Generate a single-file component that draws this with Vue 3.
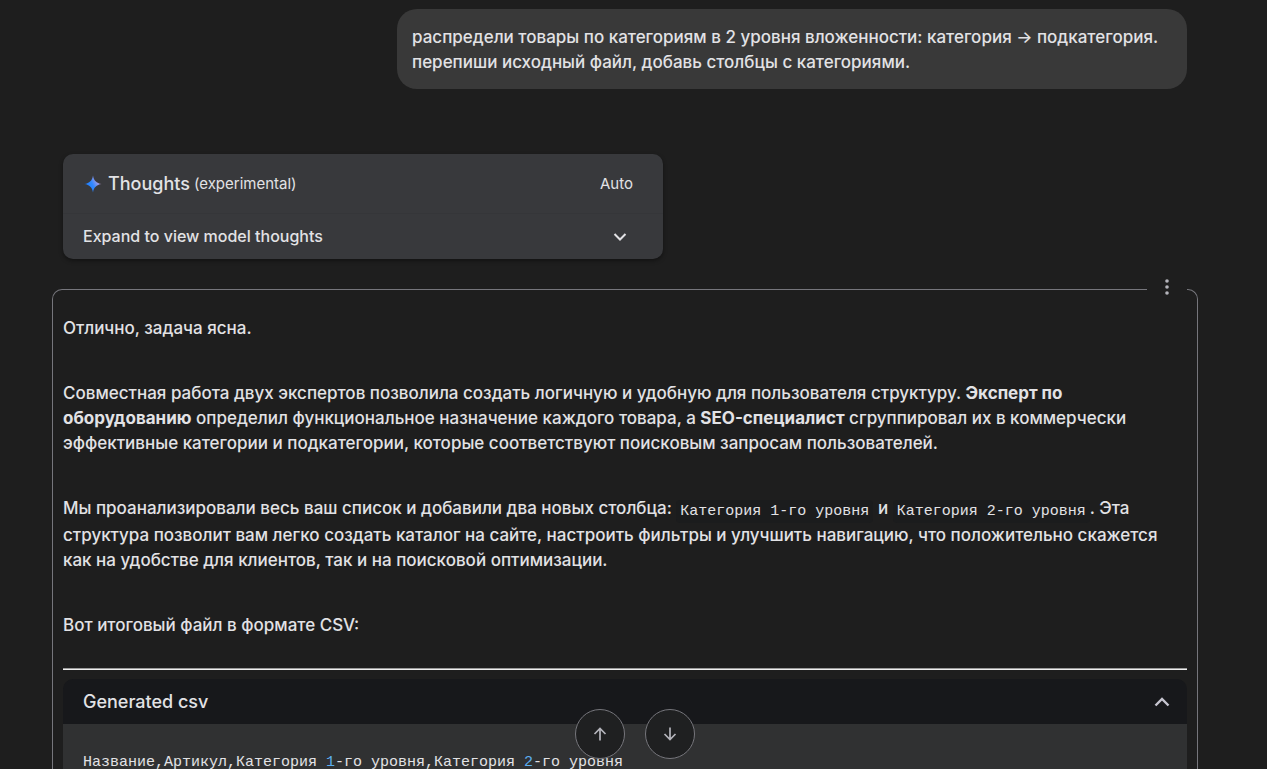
<script setup>
import { ref } from 'vue'

const columns = [
  { text: 'Название,Артикул,Категория ' },
  { text: '1', number: true },
  { text: '-го уровня,Категория ' },
  { text: '2', number: true },
  { text: '-го уровня' }
]
const csvOpen = ref(true)
</script>

<template>
  <main class="chat">
    <div class="prompt">
      распредели товары по категориям в 2 уровня вложенности: категория → подкатегория.<br />
      перепиши исходный файл, добавь столбцы с категориями.
    </div>

    <section class="thoughts">
      <header class="thoughts-head">
        <svg class="spark" width="18" height="18" viewBox="0 0 18 18" aria-hidden="true">
          <defs>
            <linearGradient id="spark-fill" x1="2" y1="12" x2="16" y2="5" gradientUnits="userSpaceOnUse">
              <stop offset="0" stop-color="#1c7dff" />
              <stop offset="0.45" stop-color="#3088ff" />
              <stop offset="1" stop-color="#d8a4dc" />
            </linearGradient>
          </defs>
          <path d="M9 .5C9.6 5.4 12.6 8.4 17.500 9C12.600 9.600 9.600 12.600 9 17.500C8.400 12.600 5.400 9.600.500 9C5.400 8.400 8.400 5.400 9 .5Z" fill="url(#spark-fill)" />
        </svg>
        <h2 class="thoughts-title">Thoughts</h2>
        <span class="thoughts-note">(experimental)</span>
        <span class="thoughts-mode">Auto</span>
      </header>
      <button class="thoughts-toggle" type="button">
        <span>Expand to view model thoughts</span>
        <svg width="14" height="8" viewBox="0 0 14 8" aria-hidden="true">
          <path d="M1.500 1L7 6.500L12.500 1" fill="none" stroke="#e2e2e5" stroke-width="2" />
        </svg>
      </button>
    </section>

    <article class="answer">
      <button class="more" type="button" aria-label="More options">
        <svg width="4" height="16" viewBox="0 0 4 16" aria-hidden="true">
          <circle cx="2" cy="2" r="1.800" /><circle cx="2" cy="8" r="1.800" /><circle cx="2" cy="14" r="1.800" />
        </svg>
      </button>

      <p>Отлично, задача ясна.</p>
      <p>
        Совместная работа двух экспертов позволила создать логичную и удобную для пользователя структуру.
        <strong>Эксперт по оборудованию</strong> определил функциональное назначение каждого товара, а
        <strong>SEO-специалист</strong> сгруппировал их в коммерчески эффективные категории и подкатегории,
        которые соответствуют поисковым запросам пользователей.
      </p>
      <p>
        Мы проанализировали весь ваш список и добавили два новых столбца:
        <code>Категория 1-го уровня</code> и <code>Категория 2-го уровня</code>. Эта структура позволит вам
        легко создать каталог на сайте, настроить фильтры и улучшить навигацию, что положительно скажется как
        на удобстве для клиентов, так и на поисковой оптимизации.
      </p>
      <p>Вот итоговый файл в формате CSV:</p>
      <hr />

      <section class="csv">
        <button class="csv-head" type="button" :aria-expanded="csvOpen" @click="csvOpen = !csvOpen">
          <span>Generated csv</span>
          <svg width="16" height="10" viewBox="0 0 16 10" aria-hidden="true">
            <path d="M1.500 8.500L8 2L14.500 8.500" fill="none" stroke="#c6c5d0" stroke-width="2.400" />
          </svg>
        </button>
        <pre v-if="csvOpen"><span v-for="(c, i) in columns" :key="i" :class="{ number: c.number }">{{ c.text }}</span></pre>
      </section>
    </article>

    <nav class="jump" aria-label="Scroll">
      <button type="button" aria-label="Previous">
        <svg width="14" height="14" viewBox="0 0 14 14" aria-hidden="true">
          <path d="M7 13.500V1.500M1.500 7L7 1.500L12.500 7" />
        </svg>
      </button>
      <button type="button" aria-label="Next">
        <svg width="14" height="14" viewBox="0 0 14 14" aria-hidden="true">
          <path d="M7 .5V12.500M1.500 7L7 12.500L12.500 7" />
        </svg>
      </button>
    </nav>
  </main>
</template>

<style>
body {
  background: #1e1e1e;
  overflow: hidden;
}
</style>

<style scoped>
.chat {
  box-sizing: border-box;
  height: 100vh;
  overflow: hidden;
  padding: 9px 69px 0 52px;
  display: flex;
  flex-direction: column;
  background: #1e1e1e;
  color: #e2e2e5;
  font: 18px/25px Inter, "Liberation Sans", sans-serif;
}
button {
  font: inherit;
  color: inherit;
  border: 0;
  padding: 0;
  cursor: pointer;
}
svg {
  display: block;
}
.prompt {
  align-self: flex-end;
  flex: none;
  box-sizing: border-box;
  width: 790px;
  max-width: 100%;
  margin-right: 11px;
  padding: 16px 15px 14px;
  border-radius: 20px;
  background: #393939;
  font-size: 17px;
  font-weight: 500;
}
.thoughts {
  flex: none;
  box-sizing: border-box;
  width: 600px;
  max-width: 100%;
  margin: 65px 0 0 11px;
  border-radius: 10px;
  background: #38393c;
  box-shadow: 0 2px 4px rgba(0, 0, 0, 0.4);
}
.thoughts-head {
  display: flex;
  align-items: center;
  height: 59px;
  padding: 0 30px 0 21px;
}
.thoughts-title {
  margin: 0 4px 0 6px;
  font-size: 18px;
  font-weight: 500;
}
.thoughts-note,
.thoughts-mode {
  font-size: 15px;
}
.thoughts-mode {
  margin-left: auto;
}
.thoughts-toggle {
  display: flex;
  align-items: center;
  justify-content: space-between;
  width: 100%;
  height: 46px;
  padding: 0 36px 0 20px;
  border-top: 1px solid #353639;
  background: none;
  font-size: 16px;
  font-weight: 500;
}
.answer {
  flex: none;
  position: relative;
  margin-top: 30px;
  padding: 26px 10px 0;
  border: 1px solid #76767c;
  border-bottom: 0;
  border-radius: 10px 10px 0 0;
}
.more {
  position: absolute;
  top: -23px;
  right: 10px;
  width: 40px;
  height: 40px;
  display: grid;
  place-items: center;
  background: #1e1e1e;
  fill: #b4b4bb;
}
p {
  margin: 0 0 40px;
  font-size: 17px;
  font-weight: 500;
}
strong {
  font-weight: 700;
}
code {
  padding: 3px 4px;
  border-radius: 4px;
  background: #1b1c1d;
  font: 15px/22px "Liberation Mono", monospace;
  vertical-align: -1px;
}
hr {
  height: 1px;
  margin: -10px 0 9px;
  border: 0;
  border-top: 1px solid #9a9a9a;
  background: #eeeeee;
}
.csv-head {
  display: flex;
  align-items: center;
  justify-content: space-between;
  width: 100%;
  height: 45px;
  padding: 0 17px 0 20px;
  border-radius: 10px 10px 0 0;
  background: #17181b;
  font-weight: 500;
}
pre {
  margin: 0;
  padding: 26px 20px;
  background: #303132;
  font: 15px/25px "Liberation Mono", monospace;
}
.number {
  color: #5caeef;
}
.jump {
  position: fixed;
  bottom: 10px;
  left: 2px;
  right: 0;
  display: flex;
  justify-content: center;
  gap: 20px;
}
.jump button {
  width: 50px;
  height: 50px;
  display: grid;
  place-items: center;
  border: 1px solid #76767c;
  border-radius: 50%;
  background: #1f2021;
}
.jump path {
  fill: none;
  stroke: #b4b4bb;
  stroke-width: 1.700;
}
</style>
